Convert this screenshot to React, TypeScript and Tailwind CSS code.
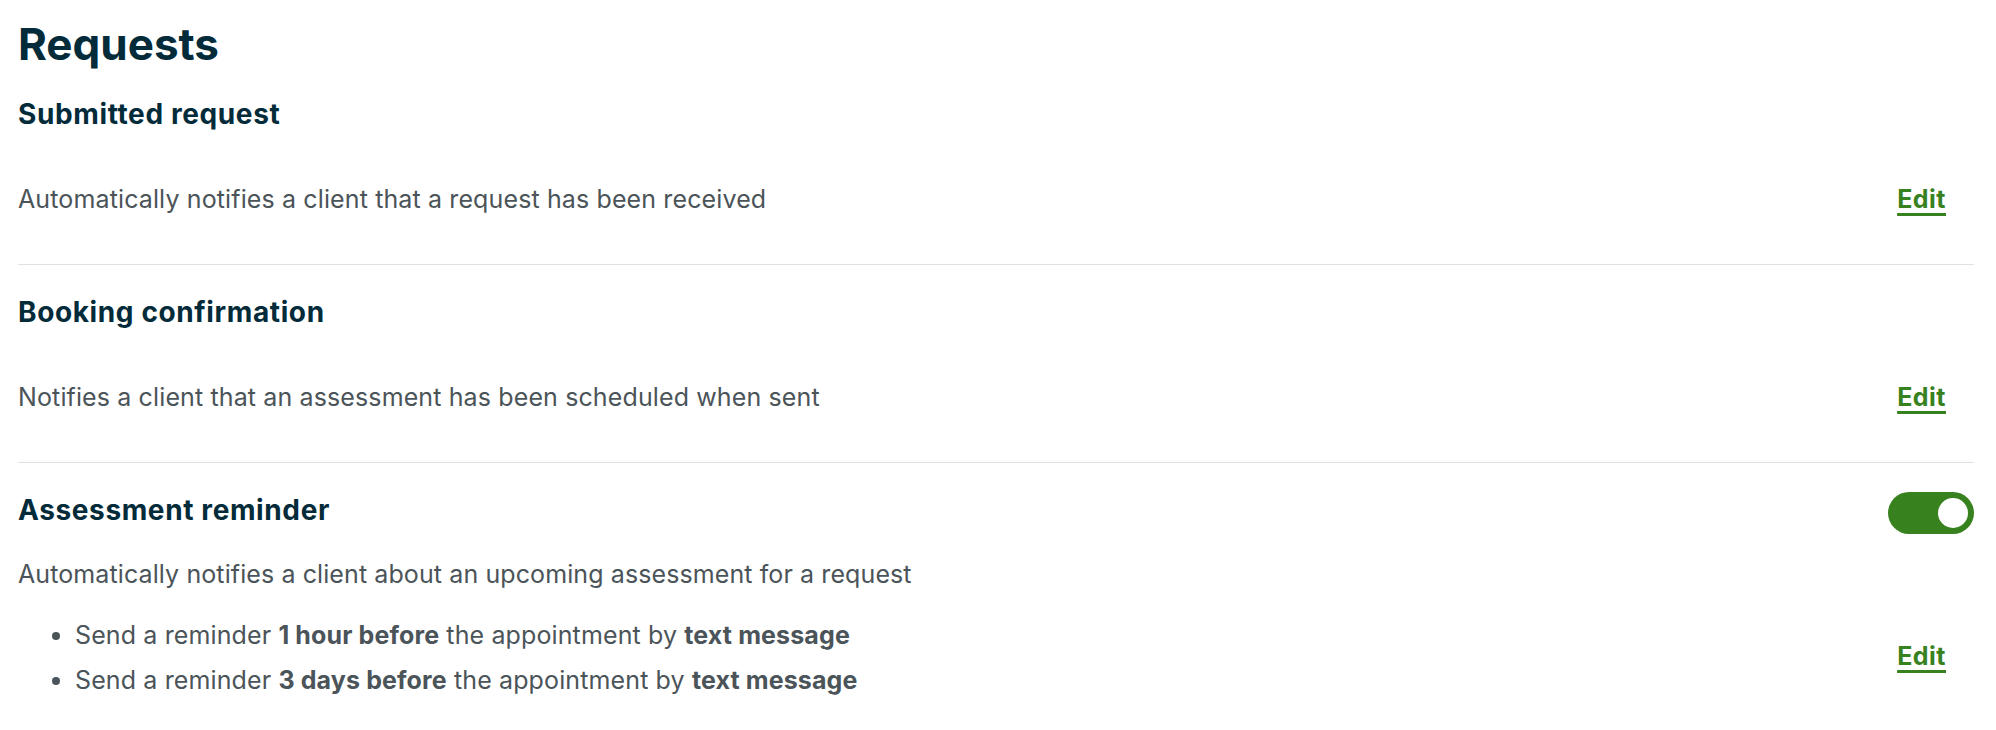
import { useState } from "react";

type Row = {
  title: string;
  description: string;
  toggle?: boolean;
  bullets?: { lead: string; when: string; mid: string; how: string }[];
};

const rows: Row[] = [
  {
    title: "Submitted request",
    description: "Automatically notifies a client that a request has been received",
  },
  {
    title: "Booking confirmation",
    description: "Notifies a client that an assessment has been scheduled when sent",
  },
  {
    title: "Assessment reminder",
    description: "Automatically notifies a client about an upcoming assessment for a request",
    toggle: true,
    bullets: [
      { lead: "Send a reminder ", when: "1 hour before", mid: " the appointment by ", how: "text message" },
      { lead: "Send a reminder ", when: "3 days before", mid: " the appointment by ", how: "text message" },
    ],
  },
];

function EditButton({ className = "" }: { className?: string }) {
  return (
    <button
      className={`shrink-0 pl-6 pr-[28px] text-[25px] font-bold leading-[36px] tracking-[0.02em] text-[#37821e] underline decoration-[3px] underline-offset-[5px] ${className}`}
    >
      Edit
    </button>
  );
}

function Toggle() {
  const [on, setOn] = useState(true);
  return (
    <button
      onClick={() => setOn(!on)}
      className={`flex h-[42px] w-[86px] shrink-0 items-center rounded-full p-[6px] ${
        on ? "justify-end bg-[#37821e]" : "justify-start bg-gray-300"
      }`}
    >
      <span className="h-[30px] w-[30px] rounded-full bg-white" />
    </button>
  );
}

export default function App() {
  return (
    <div className="min-h-screen bg-white pl-[18px] pr-[22px] pt-[18px] font-['Inter',sans-serif] text-[#4b5459]">
      <h1 className="text-[44px] font-bold leading-[52px] text-[#032b3a]">Requests</h1>
      <div className="mt-[26px]">
        {rows.map((row, i) => (
          <section key={row.title} className={i > 0 ? "border-t border-[#e1e1e1] pt-[29px]" : ""}>
            <div className="flex items-start justify-between">
              <h2 className="text-[28px] font-bold leading-[36px] tracking-[0.022em] text-[#032b3a]">
                {row.title}
              </h2>
              {row.toggle && <Toggle />}
            </div>
            {row.bullets ? (
              <div className="pt-[22px]">
                <p className="text-[25px] leading-[36px] tracking-[0.004em]">{row.description}</p>
                <div className="mt-[25px] flex items-center justify-between">
                  <ul className="flex list-disc flex-col gap-[9px] pl-[57px] text-[25px] leading-[36px] tracking-[0.005em]">
                    {row.bullets.map((b) => (
                      <li key={b.when}>
                        {b.lead}
                        <strong className="font-bold">{b.when}</strong>
                        {b.mid}
                        <strong className="font-bold">{b.how}</strong>
                      </li>
                    ))}
                  </ul>
                  <EditButton className="mb-[4px]" />
                </div>
              </div>
            ) : (
              <div className="flex items-center justify-between pb-[47px] pt-[49px]">
                <p className="text-[25px] leading-[36px] tracking-[0.005em]">{row.description}</p>
                <EditButton />
              </div>
            )}
          </section>
        ))}
      </div>
    </div>
  );
}
